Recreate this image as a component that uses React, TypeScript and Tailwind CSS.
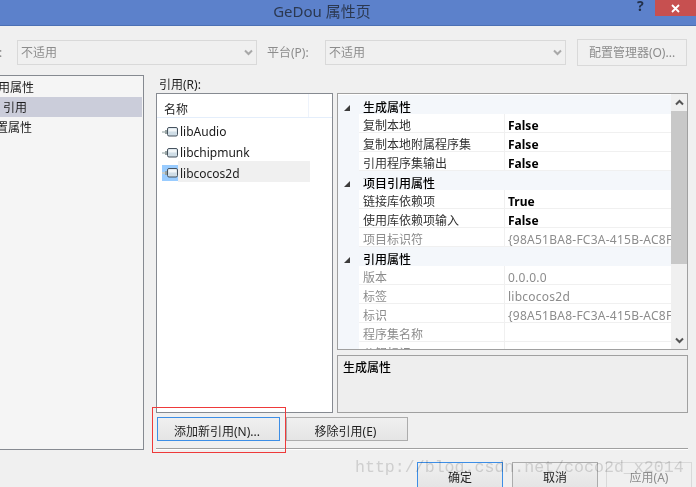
const FONT = "font-['Noto_Sans','Noto_Sans_CJK_SC',sans-serif]";

type PropRow = { name: string; value?: string; category?: boolean; strong?: boolean };

const propRows: PropRow[] = [
  { name: "生成属性", category: true },
  { name: "复制本地", value: "False", strong: true },
  { name: "复制本地附属程序集", value: "False", strong: true },
  { name: "引用程序集输出", value: "False", strong: true },
  { name: "项目引用属性", category: true },
  { name: "链接库依赖项", value: "True", strong: true },
  { name: "使用库依赖项输入", value: "False", strong: true },
  { name: "项目标识符", value: "{98A51BA8-FC3A-415B-AC8F-" },
  { name: "引用属性", category: true },
  { name: "版本", value: "0.0.0.0" },
  { name: "标签", value: "libcocos2d" },
  { name: "标识", value: "{98A51BA8-FC3A-415B-AC8F-" },
  { name: "程序集名称", value: "" },
  { name: "公钥标记", value: "" },
];

function AssemblyIcon() {
  return (
    <svg width="16" height="12" viewBox="0 0 16 12" className="shrink-0">
      <rect x="0" y="5" width="3" height="2" fill="#c4cccc" />
      <rect x="3" y="4" width="2" height="4" fill="#98a4a4" />
      <rect x="5.5" y="1.5" width="10" height="8.5" rx="1.5" fill="#cfdde6" stroke="#46525e" />
      <rect x="6.5" y="2.5" width="8" height="3" fill="#f2f6f8" />
    </svg>
  );
}

function Select({ width }: { width: string }) {
  return (
    <div className={`${width} flex h-[25px] items-center justify-between border border-[#d9d9d9] pl-[3px] pr-[3px] text-[#8c8c8c]`}>
      <span>不适用</span>
      <svg width="9" height="7" viewBox="0 0 9 7"><path d="M1 1.5 4.5 5 8 1.5" fill="none" stroke="#a8a8a8" strokeWidth="2" /></svg>
    </div>
  );
}

function ScrollArrow({ up }: { up?: boolean }) {
  return (
    <div className="flex h-[17px] items-center justify-center">
      <svg width="9" height="7" viewBox="0 0 9 7"><path d={up ? "M1 5.5 4.5 2 8 5.5" : "M1 1.5 4.5 5 8 1.5"} fill="none" stroke="#555" strokeWidth="2" /></svg>
    </div>
  );
}

export default function App() {
  return (
    <div className={`${FONT} relative flex h-[487px] w-[696px] flex-col overflow-hidden bg-[#f0f0f0] text-[12px] leading-none text-[#1e1e1e]`}>
      <div className="relative flex h-[26px] shrink-0 items-center justify-center border-b border-[#4c70b4] bg-[#5c81cb] pb-[2px] pr-[52px] text-[15px] text-[#2b3850]">
        GeDou 属性页
        <span className="absolute left-[637px] top-[-1px] text-[14px] font-bold text-[#22304a]">?</span>
        <div className="absolute left-[655px] top-0 flex h-[16px] w-[41px] items-center justify-center bg-[#c75050]">
          <svg width="9" height="9" viewBox="0 0 9 9"><path d="M1 1 8 8M8 1 1 8" stroke="#fff" strokeWidth="1.8" /></svg>
        </div>
      </div>

      <div className="mt-[13px] flex h-[27px] shrink-0 items-center">
        <span className="w-[17px] shrink-0 -translate-x-[1px] text-[#8c8c8c]">:</span>
        <Select width="w-[240px]" />
        <span className="ml-[10px] w-[58px] text-[#8c8c8c]">平台(P):</span>
        <Select width="w-[241px]" />
        <div className="ml-[11px] flex h-[27px] w-[110px] items-center justify-center border border-[#d9d9d9] text-[#8c8c8c]">配置管理器(O)...</div>
      </div>

      <div className="flex h-[384px] shrink-0">
        <div className="mt-[9px] flex w-[144px] shrink-0 flex-col overflow-hidden border border-l-0 border-[#868a91] bg-[#f5f5f5] pr-[1px] pt-[1px]">
          <div className="flex h-[20px] items-center -ml-[2px] whitespace-nowrap pt-[2px]">用属性</div>
          <div className="flex h-[20px] items-center bg-[#cbcdda] pl-[3px] pt-[2px]">引用</div>
          <div className="flex h-[20px] items-center -ml-[4px] whitespace-nowrap pt-[2px]">置属性</div>
        </div>

        <div className="ml-[12px] flex w-[532px] flex-col">
          <div className="flex h-[29px] items-end pb-[2px] pl-[3px]">引用(R):</div>
          <div className="flex h-[320px] gap-[4px]">
            <div className="w-[177px] border border-[#868a91] bg-white">
              <div className="flex h-[24px] border-b border-[#e4eefb]">
                <div className="flex w-[152px] items-center border-r border-[#eef3fb] pl-[7px] pt-[8px]">名称</div>
              </div>
              <div className="flex flex-col pt-[1px]">
                {["libAudio", "libchipmunk"].map((name) => (
                  <div key={name} className="flex h-[21px] items-center pl-[5px] pt-[5px]">
                    <AssemblyIcon />
                    <span className="ml-[2px] text-[#1a1a1a]">{name}</span>
                  </div>
                ))}
                <div className="flex h-[21px] items-center pl-[5px]">
                  <div className="flex h-[16px] translate-y-[1px] items-center bg-[#99ccff]">
                    <AssemblyIcon />
                  </div>
                  <span className="flex h-[21px] w-[132px] items-center bg-[#f0f0f0] pl-[2px] pt-[5px]">libcocos2d</span>
                </div>
              </div>
            </div>

            <div className="flex w-[351px] flex-col gap-[5px]">
              <div className="flex h-[258px] overflow-hidden border border-[#a0a0a0] bg-white">
                <div className="h-full w-[333px] overflow-hidden pt-[1px]">
                  {propRows.map((row) =>
                    row.category ? (
                      <div key={row.name} className="flex h-[19px] items-center bg-[#f4f7fb] pt-[7px]">
                        <svg width="21" height="8" viewBox="0 0 21 8" className="shrink-0">
                          <path d="M12 1v6H6z" fill="#3c3c3c" />
                        </svg>
                        <span className="pl-[4px] font-medium text-black">{row.name}</span>
                      </div>
                    ) : (
                      <div key={row.name} className="flex h-[19px]">
                        <div className="w-[21px] shrink-0 bg-[#f4f7fb]" />
                        <div className={`flex w-[146px] shrink-0 items-center border-b border-r border-[#f0f0f0] pl-[4px] pt-[6px] ${row.strong ? "text-[#333]" : "text-[#8c8c8c]"}`}>{row.name}</div>
                        <div className={`flex min-w-0 flex-1 items-center overflow-hidden whitespace-nowrap border-b border-[#f0f0f0] pl-[3px] pt-[6px] ${row.strong ? "font-bold text-black" : "tracking-[0.25px] text-[#8c8c8c]"}`}>{row.value}</div>
                      </div>
                    )
                  )}
                </div>
                <div className="flex h-full w-[16px] flex-col bg-[#f0f0f0]">
                  <ScrollArrow up />
                  <div className="h-[153px] bg-[#c8c8c8]" />
                  <div className="flex-1" />
                  <ScrollArrow />
                </div>
              </div>
              <div className="h-[58px] border border-[#a0a0a0] bg-[#eeeeee] px-[5px] pt-[6px] font-medium text-black">生成属性</div>
            </div>
          </div>

          <div className="mt-[4px] flex h-[24px] pl-[1px]">
            <button className="h-[24px] w-[123px] border border-[#3d8ee6] bg-gradient-to-b from-[#f0f0f0] to-[#e5e5e5] pt-[5px] pr-[3px]">添加新引用(N)...</button>
            <button className="ml-[6px] h-[24px] w-[122px] border border-[#acacac] bg-gradient-to-b from-[#f0f0f0] to-[#e5e5e5] pt-[5px] pr-[3px]">移除引用(E)</button>
          </div>
          <div className="mt-[7px] border-t border-b border-t-[#a0a0a0] border-b-white" />
        </div>
      </div>

      <div className="mt-[12px] flex h-[24px] shrink-0 justify-end pr-[4px]">
        <button className="h-[26px] w-[86px] border border-[#3d8ee6] bg-gradient-to-b from-[#f0f0f0] to-[#e5e5e5] pt-[5px]">确定</button>
        <button className="ml-[9px] h-[26px] w-[86px] border border-[#acacac] bg-gradient-to-b from-[#f0f0f0] to-[#e5e5e5] pt-[5px]">取消</button>
        <button className="ml-[8px] h-[26px] w-[86px] border border-[#d9d9d9] pt-[5px] text-[#8c8c8c]">应用(A)</button>
      </div>

      <div className="pointer-events-none absolute left-[152px] top-[407px] h-[46px] w-[134px] border border-[#ee3a3a]" />
      <div className="pointer-events-none absolute left-[355px] top-[458px] whitespace-nowrap font-['Liberation_Mono',monospace] text-[16.6px] leading-[20px] text-[#dcdcdc] mix-blend-multiply">http://blog.csdn.net/coco2d_x2014</div>
    </div>
  );
}
